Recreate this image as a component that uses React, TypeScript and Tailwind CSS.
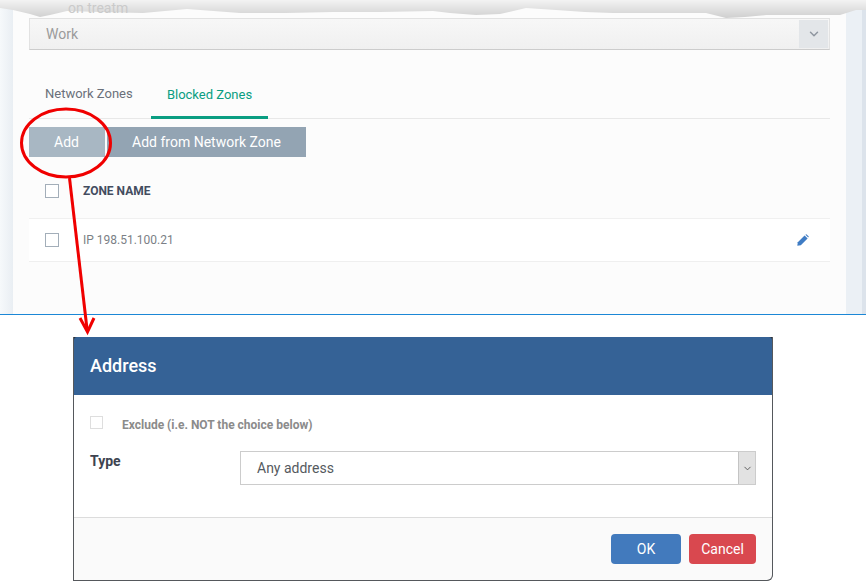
import { ChevronDown } from "lucide-react";

const Checkbox = () => (
  <div className="w-[14px] h-[14px] border border-[#a3aeb9] bg-white shrink-0" />
);

const TornEdge = () => (
  <svg className="absolute left-0 top-0" width="866" height="19" viewBox="0 0 866 19">
    <defs>
      <linearGradient id="torn" x1="0" y1="0" x2="0" y2="1">
        <stop offset="0" stopColor="#f3f3f3" />
        <stop offset="1" stopColor="#cfcfcf" />
      </linearGradient>
    </defs>
    <path
      d="M0 0H866V10L856 10L840 15L800 15L766 15L745 17L726 18L706 13L660 13L613 13L585 12L556 10L526 8L500 14L476 15L450 13L433 11L380 12L333 12L285 13L240 13L187 9L143 13L100 12L67 11L50 15L40 17L30 14L13 10L0 8Z"
      fill="url(#torn)"
    />
  </svg>
);

const Callout = () => (
  <svg className="absolute left-0 top-0 pointer-events-none" width="866" height="340" viewBox="0 0 866 340">
    <ellipse cx="66" cy="143" rx="44.5" ry="34" fill="none" stroke="#f00000" strokeWidth="3" />
    <path d="M69.5 178L87 329" stroke="#f00000" strokeWidth="3" fill="none" />
    <path d="M80 318L87.5 332L94 318" stroke="#f00000" strokeWidth="3" fill="none" />
  </svg>
);

export default function App() {
  return (
    <div className="relative w-[866px] h-[585px] overflow-hidden bg-white font-['Roboto',sans-serif]">
      {/* page behind the tear */}
      <div className="flex h-[315px] border-b border-[#1b87d6]">
        <div className="w-[13px] bg-gradient-to-r from-[#f6f9fb] to-[#e9eef3]" />
        <div className="w-[833px] bg-[#fcfcfc] pt-[18px] pl-4 pr-4">
          <div className="flex items-center justify-between h-[32px] border border-[#e2e2e2] border-b-[#cccccc] bg-gradient-to-b from-[#f7f7f7] to-[#f0f0f0] pl-4 pr-[1px]">
            <span className="text-sm text-[#9b9b9b]">Work</span>
            <div className="flex items-center justify-center w-[29px] h-[28px] bg-[#e3e6e9]">
              <ChevronDown size={14} strokeWidth={2.5} className="text-[#8f96a0]" />
            </div>
          </div>

          <div className="flex h-[69px] items-end border-b border-[#e8e8e8]">
            <div className="flex h-[47px] w-[122px] pl-4 pt-[14px] text-[13px] leading-[18px] text-[#6a707a]">
              Network Zones
            </div>
            <div className="flex justify-center w-[117px] h-[47px] pt-[14px] text-[13px] leading-[18px] text-[#0a9e82] border-b-[3px] border-[#0a9e82] mb-[-1px]">
              Blocked Zones
            </div>
          </div>

          <div className="flex gap-[2px] mt-2">
            <div className="flex items-center justify-center w-[76px] h-[30px] pr-[1px] bg-[#a8b7c3] text-sm text-white">Add</div>
            <div className="flex items-center justify-center w-[199px] h-[30px] bg-[#93a4b3] text-sm text-white">Add from Network Zone</div>
          </div>

          <div className="flex items-center h-[62px] pt-[6px] pl-4 border-b border-[#f0f0f0]">
            <Checkbox />
            <span className="ml-6 text-xs font-bold text-[#434c5f]">ZONE NAME</span>
          </div>
          <div className="flex items-center h-[43px] pl-4 bg-white border-b border-[#efefef]">
            <Checkbox />
            <span className="ml-6 text-xs text-[#7b7f86]">IP 198.51.100.21</span>
            <svg className="ml-auto mr-[21px]" width="12" height="12" viewBox="0 0 12 12">
              <path d="M0.3 11.7L0.8 8.2L7.6 1.4L10.6 4.4L3.8 11.2Z" fill="#3f7cc4" />
              <path d="M8.4 0.8L9.4 0.2L11.8 2.6L11.2 3.6Z" fill="#3f7cc4" />
            </svg>
          </div>
        </div>
        <div className="w-[16px] bg-[#ebf0f5]" />
        <div className="w-[4px] bg-[#dce3eb]" />
      </div>

      {/* dialog */}
      <div className="ml-[73px] mt-[22px] w-[700px] h-[244px] flex flex-col border border-[#55585c] border-t-0 rounded-br-md overflow-hidden bg-[#2b2f36]">
        <div className="flex items-center h-[58px] rounded-t-[3px] bg-[#356296] pl-4 text-lg font-medium text-white">Address</div>
        <div className="h-[123px] border-t border-t-white border-b border-b-[#dcdcdc] bg-white pl-4 pr-4 pt-[19px]">
          <div className="flex items-center h-[14px]">
            <div className="w-[13px] h-[13px] border border-[#dedede] bg-white" />
            <span className="ml-[19px] mt-[6px] text-xs font-bold text-[#8b8b8b]">Exclude (i.e. NOT the choice below)</span>
          </div>
          <div className="flex mt-[22px]">
            <span className="w-[150px] text-sm leading-[20px] font-bold text-[#3e4450]">Type</span>
            <div className="flex items-center justify-between flex-1 h-[34px] border border-[#cccccc] pl-4">
              <span className="text-sm text-[#555a60]">Any address</span>
              <div className="flex items-center justify-center w-[17px] h-full bg-[#e2e2e2] border-l border-[#c4c4c4]">
                <ChevronDown size={11} className="text-[#555555]" />
              </div>
            </div>
          </div>
        </div>
        <div className="flex flex-1 justify-end gap-2 bg-[#fafafa] pt-4 pr-4">
          <div className="flex items-center justify-center w-[70px] h-[30px] rounded bg-[#427abd] text-sm text-white">OK</div>
          <div className="flex items-center justify-center w-[67px] h-[30px] rounded bg-[#d9484f] text-sm text-white">Cancel</div>
        </div>
      </div>

      <TornEdge />
      <span className="absolute left-[68px] top-[1px] text-sm leading-[14px] text-[#cacaca]">on treatm</span>
      <Callout />
    </div>
  );
}
